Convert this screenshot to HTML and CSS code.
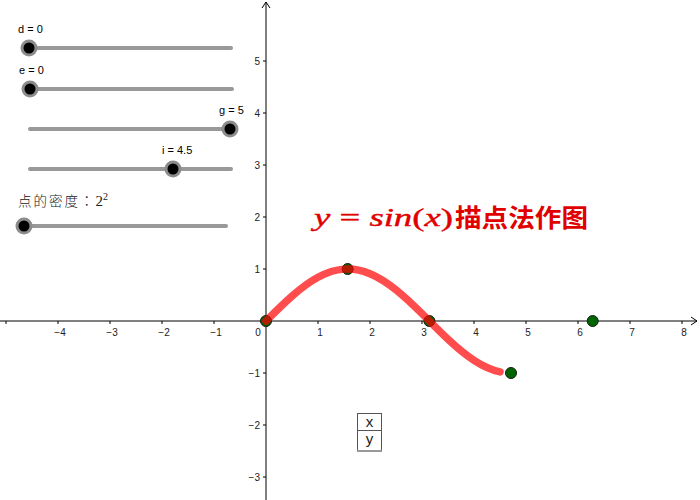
FILE: index.html
```html
<!DOCTYPE html>
<html lang="zh">
<head>
  <meta charset="UTF-8" />
  <title>y = sin(x) 描点法作图</title>
  <link rel="stylesheet" href="styles.css">
</head>
<body>
  <div class="board">
    <svg class="graph" width="700" height="500" viewBox="0 0 700 500">
      <!-- 坐标轴 -->
      <g class="axis">
        <line x1="0" y1="321" x2="697" y2="321"/>
        <polyline points="691,317 697,321 691,325"/>
        <line x1="266" y1="500" x2="266" y2="2"/>
        <polyline points="262,8 266,2 270,8"/>
        <!-- x 刻度 -->
        <path d="M6 321v3M58 321v3M110 321v3M162 321v3M214 321v3M318 321v3M370 321v3M422 321v3M474 321v3M526 321v3M578 321v3M630 321v3M682 321v3"/>
        <!-- y 刻度 -->
        <path d="M263 61h3M263 113h3M263 165h3M263 217h3M263 269h3M263 373h3M263 425h3M263 477h3"/>
      </g>
      <g class="tick-label">
        <text x="60" y="336">−4</text>
        <text x="112" y="336">−3</text>
        <text x="164" y="336">−2</text>
        <text x="216" y="336">−1</text>
        <text x="258" y="336">0</text>
        <text x="320" y="336">1</text>
        <text x="372" y="336">2</text>
        <text x="424" y="336">3</text>
        <text x="476" y="336">4</text>
        <text x="528" y="336">5</text>
        <text x="580" y="336">6</text>
        <text x="632" y="336">7</text>
        <text x="684" y="336">8</text>
      </g>
      <g class="tick-label y-labels">
        <text x="260" y="65">5</text>
        <text x="260" y="117">4</text>
        <text x="260" y="169">3</text>
        <text x="260" y="221">2</text>
        <text x="260" y="273">1</text>
        <text x="260" y="377">−1</text>
        <text x="260" y="429">−2</text>
        <text x="260" y="481">−3</text>
      </g>

      <!-- 描点 -->
      <g class="pt">
        <circle cx="266" cy="321" r="5.5"/>
        <circle cx="347.7" cy="269" r="5.5"/>
        <circle cx="429.4" cy="321" r="5.5"/>
        <circle cx="511" cy="373" r="5.5"/>
        <circle cx="592.7" cy="321" r="5.5"/>
      </g>

      <!-- 正弦曲线 0 ≤ x ≤ i -->
      <path class="curve" d="M266 321 C274.67 312.33 283.33 303.68 292 296.07 C300.67 288.46 309.33 281.92 318 277.24 C326.67 272.56 335.33 269.74 344 269.13 C352.67 268.52 361.33 270.11 370 273.72 C378.67 277.33 387.33 282.94 396 289.88 C404.67 296.82 413.33 305.08 422 313.66 C430.67 322.24 439.33 331.12 448 339.24 C456.67 347.36 465.33 354.69 474 360.35 C482.67 366.02 491.33 370 500 371.83"/>

      <!-- 滑动条 -->
      <g class="slider">
        <text class="slider-label" x="18" y="33">d = 0</text>
        <line x1="30" y1="48" x2="231" y2="48"/>
        <circle class="knob-ring" cx="29" cy="48" r="8.5"/>
        <circle class="knob" cx="29" cy="48" r="5.5"/>
      </g>
      <g class="slider">
        <text class="slider-label" x="19" y="74">e = 0</text>
        <line x1="31" y1="89" x2="232" y2="89"/>
        <circle class="knob-ring" cx="30" cy="89" r="8.5"/>
        <circle class="knob" cx="30" cy="89" r="5.5"/>
      </g>
      <g class="slider">
        <text class="slider-label" x="219" y="114">g = 5</text>
        <line x1="30" y1="129" x2="231" y2="129"/>
        <circle class="knob-ring" cx="230" cy="129" r="8.5"/>
        <circle class="knob" cx="230" cy="129" r="5.5"/>
      </g>
      <g class="slider">
        <text class="slider-label" x="162" y="154">i = 4.5</text>
        <line x1="30" y1="169" x2="231" y2="169"/>
        <circle class="knob-ring" cx="173" cy="169" r="8.5"/>
        <circle class="knob" cx="173" cy="169" r="5.5"/>
      </g>
      <g class="slider">
        <text class="density-label" lang="zh-TW" x="18" y="206">点的密度：<tspan class="num">2</tspan><tspan class="num sup" dy="-6">2</tspan></text>
        <line x1="25" y1="226" x2="226" y2="226"/>
        <circle class="knob-ring" cx="24" cy="226" r="8.5"/>
        <circle class="knob" cx="24" cy="226" r="5.5"/>
      </g>

      <!-- 标题 -->
      <text class="title-math" x="314" y="226" textLength="139" lengthAdjust="spacingAndGlyphs">y <tspan class="upright">=</tspan> sin<tspan class="upright">(</tspan>x<tspan class="upright">)</tspan></text>
      <text class="title-cjk" x="455" y="227" textLength="133" lengthAdjust="spacingAndGlyphs">描点法作图</text>

      <!-- x/y 表格 -->
      <g class="xy-table">
        <rect x="357.5" y="413.5" width="24" height="17"/>
        <rect x="357.5" y="430.5" width="24" height="20"/>
        <line class="table-shadow" x1="357" y1="451" x2="382" y2="451"/>
        <text x="369.5" y="427">x</text>
        <text x="369.5" y="444">y</text>
      </g>
    </svg>
  </div>
</body>
</html>
```

FILE: styles.css
```css
* {
  margin: 0;
  padding: 0;
  box-sizing: border-box;
}

body {
  background: #fff;
  font-family: 'Liberation Sans', Arial, sans-serif;
}

.board {
  width: 700px;
  height: 500px;
  background: #fff;
  overflow: hidden;
}

.graph {
  display: block;
}

.axis line,
.axis polyline,
.axis path {
  stroke: #000;
  stroke-width: 1;
  fill: none;
}

.tick-label text {
  font-family: 'Liberation Sans', Arial, sans-serif;
  font-size: 10px;
  fill: #222;
  text-anchor: middle;
}

.y-labels text {
  text-anchor: end;
}

.pt circle {
  fill: #006400;
  stroke: #1a1a1a;
  stroke-width: 1;
}

.curve {
  fill: none;
  stroke: #ff0000;
  stroke-opacity: 0.7;
  stroke-width: 7.5;
  stroke-linecap: round;
  stroke-linejoin: round;
}

/* 滑动条 */
.slider line {
  stroke: #999;
  stroke-width: 4;
  stroke-linecap: round;
}
.knob-ring {
  fill: #8c8c8c;
}
.knob {
  fill: #000;
}
.slider-label {
  font-family: 'Liberation Sans', Arial, sans-serif;
  font-size: 11px;
  fill: #000;
}
.density-label {
  font-family: 'Noto Sans CJK TC', 'Noto Sans CJK SC', serif;
  font-size: 13.5px;
  font-weight: 300;
  letter-spacing: 2px;
  fill: #222;
}
.density-label .num {
  font-family: 'Liberation Serif', serif;
  font-size: 15px;
  letter-spacing: 0;
}
.density-label .sup {
  font-size: 10px;
}

/* 标题 */
.title-math {
  font-family: 'Liberation Serif', 'DejaVu Serif', serif;
  font-style: italic;
  font-size: 25px;
  fill: #e00000;
  stroke: #e00000;
  stroke-width: 0.4;
}
.title-math .upright {
  font-style: normal;
}
.title-cjk {
  font-family: 'Noto Sans CJK SC', sans-serif;
  font-weight: bold;
  font-size: 25px;
  fill: #e00000;
}

/* x/y 表格 */
.xy-table rect {
  fill: #fff;
  stroke: #555;
  stroke-width: 1;
}
.xy-table .table-shadow {
  stroke: #999;
  stroke-width: 2;
}
.xy-table text {
  font-family: 'Liberation Sans', Arial, sans-serif;
  font-size: 15px;
  fill: #222;
  text-anchor: middle;
}
```
